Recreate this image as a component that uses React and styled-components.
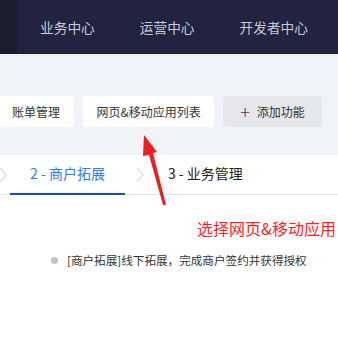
import React from "react";
import styled, { createGlobalStyle } from "styled-components";

const Global = createGlobalStyle`
  html, body { margin: 0; padding: 0; background: #fff; }
  body { font-family: "Noto Sans CJK SC", "Noto Sans", sans-serif; overflow: hidden; }
`;

const Page = styled.div`
  position: relative;
  width: 338px;
  height: 338px;
  overflow: hidden;
  background: #fff;
`;

const Header = styled.div`
  display: flex;
  height: 54px;
  background: #222340;
  border-bottom: 1px solid #181930;
  box-sizing: border-box;
`;

const SideStrip = styled.div`
  width: 17px;
  background: #1b1c2d;
`;

const NavList = styled.div`
  display: flex;
  align-items: center;
  padding-left: 23px;
  gap: 45px;
`;

const NavItem = styled.span`
  color: #c8c9d6;
  font-size: 13.7px;
`;

const Toolbar = styled.div`
  background: #f0f3f8;
  padding: 42px 0 28px;
`;

const ButtonRow = styled.div`
  display: flex;
  gap: 9px;
  margin-left: -2px;
`;

const Btn = styled.div`
  height: 31px;
  display: flex;
  align-items: center;
  gap: 7px;
  padding: 0 ${(p) => p.$pad}px;
  border-radius: 4px;
  background: ${(p) => (p.$muted ? "#e6e7ea" : "#ffffff")};
  color: #333;
  font-size: 12px;
  white-space: nowrap;
`;

const Plus = styled.span`
  font-size: 18px;
  font-weight: 300;
  line-height: 1;
  color: #444;
  margin-top: -2px;
`;

const Tabs = styled.div`
  display: flex;
  align-items: stretch;
  height: 39px;
  border-bottom: 1px solid #e2e3e6;
  margin-left: -4px;
`;

const Chevron = styled.div`
  display: flex;
  align-items: center;
  width: ${(p) => p.$w}px;
  justify-content: center;
`;

const Tab = styled.div`
  display: flex;
  align-items: center;
  padding: 0 ${(p) => p.$pad}px 2px;
  font-size: 14px;
  color: ${(p) => (p.$active ? "#2f7ce6" : "#222")};
  border-bottom: 2px solid ${(p) => (p.$active ? "#1848c2" : "transparent")};
  margin-bottom: -1px;
  white-space: nowrap;
`;

const Body = styled.div`
  padding-top: 23px;
`;

const Note = styled.div`
  text-align: right;
  padding-right: 2px;
  color: #ff1e1e;
  font-size: 16px;
  line-height: 20px;
  white-space: nowrap;
`;

const Bullet = styled.div`
  display: flex;
  align-items: center;
  gap: 9px;
  margin: 14px 0 0 51px;
  font-size: 11.6px;
  color: #333;
  white-space: nowrap;
`;

const BulletText = styled.span`
  color: #333;
`;

const Dot = styled.span`
  width: 7px;
  height: 7px;
  border-radius: 50%;
  background: #c4c4c4;
`;

const ArrowLayer = styled.svg`
  position: absolute;
  left: 0;
  top: 0;
  pointer-events: none;
`;

const Chev = () => (
  <svg width="8" height="16" viewBox="0 0 8 16">
    <path d="M1 1 L7 8 L1 15" fill="none" stroke="#dcdde0" strokeWidth="1.2" />
  </svg>
);

export default function App() {
  return (
    <Page>
      <Global />
      <Header>
        <SideStrip />
        <NavList>
          <NavItem>业务中心</NavItem>
          <NavItem>运营中心</NavItem>
          <NavItem>开发者中心</NavItem>
        </NavList>
      </Header>
      <Toolbar>
        <ButtonRow>
          <Btn $pad={14}>账单管理</Btn>
          <Btn $pad={13.5}>网页&amp;移动应用列表</Btn>
          <Btn $pad={17} $muted>
            <Plus>+</Plus>添加功能
          </Btn>
        </ButtonRow>
      </Toolbar>
      <Tabs>
        <Chevron $w={14}><Chev /></Chevron>
        <Tab $active $pad={20}>2 - 商户拓展</Tab>
        <Chevron $w={30}><Chev /></Chevron>
        <Tab $pad={13}>3 - 业务管理</Tab>
      </Tabs>
      <Body>
        <Note>选择网页&amp;移动应用</Note>
        <Bullet>
          <Dot />
          <BulletText>[商户拓展]线下拓展，完成商户签约并获得授权</BulletText>
        </Bullet>
      </Body>
      <ArrowLayer width="338" height="338" viewBox="0 0 338 338">
        <polygon points="144,135 157,152 153,153 166,205 163,205 149,155 143,156" fill="#f01e1e" />
      </ArrowLayer>
    </Page>
  );
}
